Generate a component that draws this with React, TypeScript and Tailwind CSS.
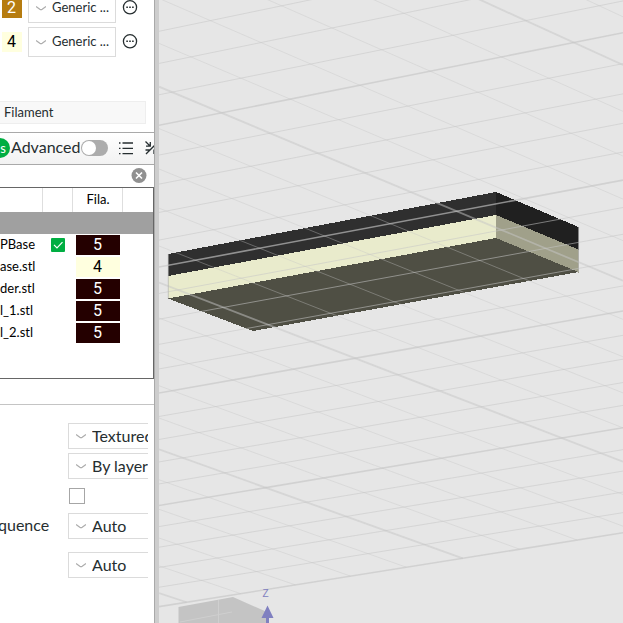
interface Filament {
  slot: number
  name: string
  swatch: string
}

const FILAMENTS: Filament[] = [
  { slot: 2, name: 'Generic ...', swatch: 'bg-[#b67c10] text-white' },
  { slot: 4, name: 'Generic ...', swatch: 'bg-[#ffffdf] text-black' },
]

const PARTS = [
  { name: 'PBase', slot: 5, printable: true },
  { name: 'ase.stl', slot: 4 },
  { name: 'der.stl', slot: 5 },
  { name: 'l_1.stl', slot: 5 },
  { name: 'l_2.stl', slot: 5 },
]

const VIEW = { left: 159, right: 623 }

// height at which grid line n meets a vertical edge, seen in perspective
const meet = (a: number, b: number, c: number) => (n: number) => (a + b * n) / (1 + c * n)

const risingLeft = meet(125.3, 31.73, 0.01263)
const risingRight = meet(32.7, 31.77, 0.0127)
const fallingLeft = meet(86.7, 44.12, 0.01748)
const fallingRight = meet(280.7, 44.28, 0.0175)

const LAST = 20

function range(from: number, to: number): number[] {
  return Array.from({ length: to - from + 1 }, (_, i) => from + i)
}

function Grid() {
  const { left, right } = VIEW
  const edge = [risingLeft(LAST), risingRight(LAST)]

  return (
    <g stroke="#c6c6c6">
      {range(-10, LAST).map(n => (
        <line
          key={`r${n}`}
          x1={left}
          y1={risingLeft(n)}
          x2={right}
          y2={risingRight(n)}
          strokeWidth={n % 5 === 0 ? 1.6 : 1}
          strokeOpacity={n % 5 === 0 ? 0.65 : 0.55}
        />
      ))}
      {range(-12, 15).map(n => {
        const y1 = fallingLeft(n)
        const y2 = fallingRight(n)
        // stop at the front edge of the plate
        const t = Math.min(1, (edge[0] - y1) / (y2 - y1 - (edge[1] - edge[0])))
        return (
          <line
            key={`f${n}`}
            x1={left}
            y1={y1}
            x2={left + t * (right - left)}
            y2={y1 + t * (y2 - y1)}
            strokeWidth={n % 5 === 0 ? 1.8 : 1}
            strokeOpacity={n % 5 === 0 ? 0.5 : 0.38}
          />
        )
      })}
    </g>
  )
}

function Viewport() {
  return (
    <svg
      className="h-full min-w-0 flex-1 bg-[#e6e6e6]"
      viewBox="159 0 464 623"
      preserveAspectRatio="xMinYMin slice"
      role="img"
      aria-label="Build plate"
    >
      <g shapeRendering="crispEdges">
        <polygon points="168,254 496,192 496,216 168,277" fill="#2f2f2f" />
        <polygon points="496,192 578.5,227 578.5,250 496,215" fill="#202020" />
        <polygon points="168,276 496,215 496,239 168,299" fill="#e9ebcc" />
        <polygon points="496,215 578.5,249.5 578.5,272.5 496,238.5" fill="#a0a08a" />
        <polygon points="168,298.5 496,238 578.5,272 253,331" fill="#4f4f44" />
      </g>
      <Grid />
      <path d="M168.3 254V298.5M578.5 227V272" stroke="#b4b4b4" strokeWidth="0.7" />
      <polygon points="178.5,607 233,597 267,612 267,623 178.5,623" fill="#c4c4c4" />
      <path d="M218.5 600V623M180 622L232 612" stroke="#cfcfcf" fill="none" />
      <path d="M267.5 605.5L273.5 618H269V623H266V618H261.5Z" fill="#8080c0" />
      <text x="262.5" y="597" fill="#8080c0" fontSize="10" fontFamily="Liberation Sans, sans-serif">
        Z
      </text>
    </svg>
  )
}

interface DropdownProps {
  label: string
  value: string
  className: string
}

function Dropdown({ label, value, className }: DropdownProps) {
  return (
    <div className="grid items-center">
      <select
        aria-label={label}
        className={`col-start-1 row-start-1 appearance-none border border-[#dbdbdb] bg-white text-[#262e30] outline-none ${className}`}
      >
        <option>{value}</option>
      </select>
      <svg className="pointer-events-none col-start-1 row-start-1 ml-2 h-2 w-2.5" viewBox="0 0 10 8" fill="none">
        <path d="M0 2.6L3.8 5.3Q5 6.1 6.2 5.3L10 2.6" stroke="#acacac" strokeWidth="1.2" />
      </svg>
    </div>
  )
}

function MoreButton() {
  return (
    <button aria-label="More" className="ml-1.5 size-4">
      <svg viewBox="0 0 16 16" fill="none">
        <circle cx="8" cy="7.3" r="6.6" stroke="#262e30" strokeWidth="1.3" />
        <path d="M4.3 7.3H5.9M7.2 7.3H8.8M10.1 7.3H11.7" stroke="#262e30" strokeWidth="1.4" />
      </svg>
    </button>
  )
}

function Toolbar() {
  return (
    <div className="flex h-[33px] items-center overflow-hidden border-y border-[#a9a9a9] bg-linear-to-b from-white to-[#f2f2f2] pb-0.5">
      <button className="-ml-2.5 size-5 shrink-0 rounded-full bg-[#00ae42] pr-1 text-right text-[13px] leading-5 text-white">
        s
      </button>
      <label htmlFor="advanced" className="ml-px w-[70px] shrink-0 pb-0.5 text-[16px] leading-6 text-[#262e30]">
        Advanced
      </label>
      <input
        id="advanced"
        type="checkbox"
        role="switch"
        className="h-4 w-[27px] shrink-0 appearance-none rounded-full bg-[#acacac] p-px before:block before:size-3.5 before:rounded-full before:bg-white"
      />
      <button aria-label="Object list" className="ml-2.5 size-4 shrink-0">
        <svg viewBox="0 0 16 16" fill="none" stroke="#262e30" strokeWidth="1.3">
          <path d="M4.5 3H15M4.5 8.3H15M4.5 13.6H15M1 3H2.5M1 8.3H2.5M1 13.6H2.5" />
        </svg>
      </button>
      <button aria-label="Compare" className="ml-2.5 size-4 shrink-0">
        <svg viewBox="0 0 16 16" fill="none" stroke="#262e30" strokeWidth="1.3">
          <path d="M2 14L14 2M1.5 1.5L6 6M6.3 2V6.2H2M1.5 10H6M10 9.5V14M10 9.5H14" />
        </svg>
      </button>
    </div>
  )
}

function ObjectTable() {
  return (
    <div className="h-48 border-y border-r border-[#666]">
      <table className="w-full table-fixed border-collapse text-[13px] leading-5 text-black">
        <colgroup>
          <col className="w-[42px]" />
          <col className="w-[30px]" />
          <col className="w-[50px]" />
          <col />
        </colgroup>
        <thead>
          <tr className="h-6">
            <th className="border-r border-[#dedede]" />
            <th className="border-r border-[#dedede]" />
            <th className="border-r border-[#dedede] p-0 pb-0.5 pl-0.5 font-normal">Fila.</th>
            <th />
          </tr>
        </thead>
        <tbody>
          <tr className="h-[22px] bg-[#a0a0a0]">
            <td colSpan={4} className="p-0" />
          </tr>
          {PARTS.map(part => (
            <tr key={part.name} className="h-[22px]">
              <td className="p-0 pb-0.5 whitespace-nowrap">{part.name}</td>
              <td className="p-0">
                {part.printable && (
                  <div className="ml-[9px] grid w-3.5 items-center">
                    <input
                      type="checkbox"
                      aria-label="Printable"
                      defaultChecked
                      className="col-start-1 row-start-1 size-3.5 appearance-none rounded-[1px] bg-[#00ae42]"
                    />
                    <svg className="pointer-events-none col-start-1 row-start-1 size-3.5" viewBox="0 0 14 14" fill="none">
                      <path d="M3 6.8L6 9.8L11.5 4.2" stroke="#fff" strokeWidth="1.2" />
                    </svg>
                  </div>
                )}
              </td>
              <td className="py-px pr-0.5 pl-1">
                <div
                  className={`h-5 pr-px text-center font-[Roboto,sans-serif] text-[16px] ${part.slot === 4 ? 'bg-[#ffffdf] text-black' : 'bg-[#240000] text-white'}`}
                >
                  {part.slot}
                </div>
              </td>
              <td />
            </tr>
          ))}
        </tbody>
      </table>
    </div>
  )
}

function PlateSettings() {
  const box = 'h-[26px] w-20 border-r-0 pb-0.5 pl-[23px] text-[16px]'

  return (
    <div className="grid grid-cols-[68px_80px] items-center border-t border-[#c4c4c4] pt-[18px] text-[16px] leading-6 text-[#262e30]">
      <div className="col-start-2">
        <Dropdown label="Plate type" value="Textured" className={box} />
      </div>
      <div className="col-start-2 mt-1">
        <Dropdown label="Print sequence" value="By layer" className={box} />
      </div>
      <div className="col-start-2 flex h-[34px] items-center pl-px">
        <input type="checkbox" aria-label="Spiral vase" className="size-4 appearance-none border border-[#a6a6a6] bg-white" />
      </div>
      <span className="-ml-0.5 pb-0.5">quence</span>
      <Dropdown label="Layer sequence" value="Auto" className={box} />
      <div className="col-start-2 mt-[13px]">
        <Dropdown label="Other layers" value="Auto" className={box} />
      </div>
    </div>
  )
}

export default function App() {
  return (
    <div className="flex h-screen overflow-hidden bg-white font-[Lato,sans-serif]">
      <aside className="w-[159px] shrink-0 overflow-hidden border-r-4 border-[#cdcdcd]">
        <div className="flex h-full flex-col border-r border-[#a9a9a9]">
          <div className="-mt-[7px] flex flex-col gap-1">
            {FILAMENTS.map(f => (
              <div key={f.slot} className="flex items-center pl-0.5">
                <button className={`mr-1.5 size-5 pr-px font-[Roboto,sans-serif] text-[16px] leading-5 ${f.swatch}`}>
                  {f.slot}
                </button>
                <Dropdown
                  label={`Filament ${f.slot}`}
                  value={f.name}
                  className="h-[30px] w-[88px] pl-[23px] text-[13px]"
                />
                <MoreButton />
              </div>
            ))}
          </div>
          <div className="mt-11 mr-2 h-[23px] border border-l-0 border-[#eee] bg-[#f8f8f8] pl-1 text-[13px] leading-5 text-[#262e30]">
            Filament
          </div>
          <div className="mt-2">
            <Toolbar />
          </div>
          <div className="flex h-[22px] items-center justify-end pr-[7px]">
            <button aria-label="Clear search" className="size-4">
              <svg viewBox="0 0 16 16">
                <circle cx="8" cy="7.5" r="7.5" fill="#909090" />
                <path d="M5 4.5L11 10.5M11 4.5L5 10.5" stroke="#fff" strokeWidth="1.6" />
              </svg>
            </button>
          </div>
          <ObjectTable />
          <div className="mt-[25px]">
            <PlateSettings />
          </div>
        </div>
      </aside>
      <Viewport />
    </div>
  )
}
